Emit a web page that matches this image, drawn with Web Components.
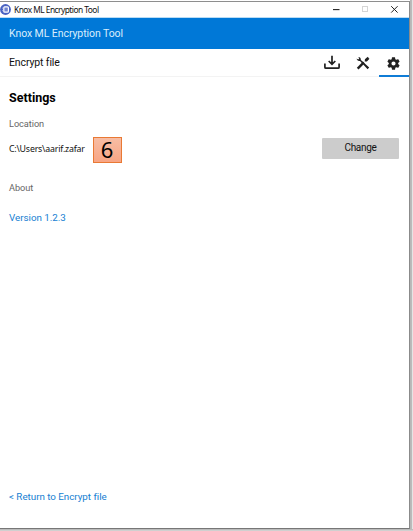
<!DOCTYPE html>
<html lang="en">
<head>
<meta charset="utf-8">
<title>Knox ML Encryption Tool</title>
<style>
html,body{margin:0;width:413px;height:531px;overflow:hidden;background:#fff;font-family:Roboto,sans-serif}
</style>
</head>
<body>
<app-window>
  <title-bar slot="top">Knox ML Encryption Tool</title-bar>
  <app-header slot="top">Knox ML Encryption Tool</app-header>
  <tool-nav slot="top">Encrypt file</tool-nav>
  <settings-page>
    <span slot="title">Settings</span>
    <span slot="path">C:\Users\aarif.zafar</span>
    <step-badge slot="badge">6</step-badge>
    <flat-button slot="action">Change</flat-button>
    <span slot="version">Version 1.2.3</span>
    <span slot="back">&lt; Return to Encrypt file</span>
  </settings-page>
</app-window>
<script>
const define = (name, html) => customElements.define(name, class extends HTMLElement {
  constructor() {
    super();
    this.attachShadow({mode: 'open'}).innerHTML = html;
  }
});

define('app-window', `<style>
:host{display:flex;box-sizing:border-box;width:413px;height:531px;padding-top:1px;background:linear-gradient(90deg,#fff 410px,#b5b5b5 410px,#bdbdbd 412px,#e4e4e4 412px)}
.frame{display:flex;flex-direction:column;box-sizing:border-box;width:410px;height:528px;background:#fff;border-top:1px solid #8e8e8e;border-right:1px solid #8b8b8b;border-bottom:1px solid #777}
.shell{display:flex;flex-direction:column;width:413px;height:530px}
.shadow{height:2px;background:linear-gradient(#b2b2b2,#dadada)}
</style><div class="shell"><div class="frame"><slot name="top"></slot><slot></slot></div><div class="shadow"></div></div>`);

define('title-bar', `<style>
:host{display:flex;align-items:center;height:15px;flex:none;font:8.4px/15px "Noto Sans",sans-serif;color:#111;border-bottom:1px solid #b9dcf5}
.logo{width:11px;height:11px;flex:none;margin-right:3px}
.text{flex:1;white-space:nowrap;letter-spacing:-.53px}
.controls{width:86px;height:15px;flex:none}
</style>
<svg class="logo" viewBox="0 0 11 11"><circle cx="5.5" cy="5.5" r="5.4" fill="#4a62c2"/><rect x="3.8" y="2.8" width="4.6" height="5.4" rx=".9" fill="#7184d0" stroke="#fff" stroke-width="1.2"/><path d="M2.2 4.2h1.6M2.2 6.6h1.6" stroke="#c5cef0" stroke-width=".8"/></svg>
<span class="text"><slot></slot></span>
<svg class="controls" viewBox="0 0 86 15" fill="none"><path d="M10 7.6h6.5" stroke="#222" stroke-width="1.1"/><rect x="39.5" y="4.5" width="5" height="5" stroke="#d5d5d5"/><path d="M68.2 4.2l6.4 6.4M74.6 4.2l-6.4 6.4" stroke="#222" stroke-width="1"/></svg>`);

define('app-header', `<style>
:host{display:flex;align-items:center;box-sizing:border-box;height:31px;flex:none;padding:0 9px;background:#0078d7;color:#d9edfc;font-size:10.5px;letter-spacing:-.07px;white-space:nowrap}
</style><slot></slot>`);

define('tool-nav', `<style>
:host{display:flex;align-items:stretch;box-sizing:border-box;height:28px;flex:none;padding-left:9px;border-bottom:1px solid #f3f3f3;font-size:10.5px;color:#111;letter-spacing:-.12px}
.label{flex:1;line-height:28px}
.tab{width:31px;display:flex;align-items:center;justify-content:center;box-sizing:border-box;padding-right:2px}
.tab.active{width:30px;border-bottom:2px solid #0f7cd6;padding-top:2px;padding-right:1px;margin-bottom:-1px}
svg{display:block}
</style><span class="label"><slot></slot></span>
<div class="tab"><svg width="16" height="15" viewBox="0 0 16 15" fill="none" stroke="#202020" stroke-width="1.7"><path d="M8 .8v8M4.7 6L8 9.3 11.3 6M.9 8.4v3.8q0 1 1 1h12.2q1 0 1-1V8.4"/></svg></div>
<div class="tab"><svg width="14" height="14" viewBox="0 0 14 14" fill="#202020"><path d="M4.9 3.9l8.3 7.6-1.6 1.7L4 4.9Q2.3 5.3 1 3.8L.6 2.5l1.5 1 1.1-1.1L2.3.9q2.6.2 2.6 3z"/><path d="M.8 11.8L7 5.6l1.7 1.7-6.2 6.2z"/><path d="M8.7 5.5l.2-2.3L11.7.8l.4.9.8-.3-.1 1 .7.3-2.6 2.8z"/></svg></div>
<div class="tab active"><svg width="15" height="15" viewBox="0 0 24 24" fill="#202020"><path fill-rule="evenodd" d="M19.43 12.98c.04-.32.07-.64.07-.98s-.03-.66-.07-.98l2.11-1.65c.19-.15.24-.42.12-.64l-2-3.46c-.12-.22-.39-.3-.61-.22l-2.49 1a7.3 7.3 0 0 0-1.69-.98L14.5 2.42A.5.5 0 0 0 14 2h-4a.5.5 0 0 0-.5.42l-.38 2.65c-.61.25-1.17.59-1.69.98l-2.49-1a.5.5 0 0 0-.61.22l-2 3.46c-.13.22-.07.49.12.64l2.11 1.65a7.9 7.9 0 0 0 0 1.96l-2.11 1.65a.5.5 0 0 0-.12.64l2 3.46c.12.22.39.3.61.22l2.49-1c.52.4 1.08.73 1.69.98l.38 2.65c.03.24.25.42.5.42h4c.25 0 .47-.18.5-.42l.38-2.65c.61-.25 1.17-.59 1.69-.98l2.49 1c.23.09.49 0 .61-.22l2-3.46a.5.5 0 0 0-.12-.64zM12 15.3a3.3 3.3 0 1 1 0-6.6 3.3 3.3 0 0 1 0 6.6z"/></svg></div>`);

define('step-badge', `<style>
:host{display:flex;box-sizing:border-box;width:29px;height:26px;justify-content:center;align-items:center;border:1px solid #e97934;background:linear-gradient(#f7bda4,#f8a584);font:22px/22px "Noto Sans",sans-serif;color:#000;padding:0 1px 2px 0}
</style><slot></slot>`);

define('flat-button', `<style>
:host{display:block;box-sizing:border-box;width:77px;height:21px;background:#ccc;border-radius:1px;text-align:center;font:10px/19px Roboto,sans-serif;color:#111;letter-spacing:-.3px}
</style><slot></slot>`);

define('settings-page', `<style>
:host{display:flex;flex-direction:column;flex:1;box-sizing:border-box;padding:12px 10px 24px 9px;white-space:nowrap;font-size:10px;color:#111}
h1{margin:0;font-size:12.5px;line-height:18px;font-weight:700;color:#000}
.label{font-size:9.2px;line-height:12px;color:#666;letter-spacing:-.05px}
.location{margin-top:11px}
.row{display:flex;align-items:center;height:26px;margin-top:7px}
.path{width:84px;padding-bottom:3px;font:8.8px/14px "Noto Sans",sans-serif;letter-spacing:-.19px}
.action{margin-left:auto;margin-bottom:3px}
.about{margin-top:19px}
.link{color:#1680d2;font-size:9.8px;line-height:14px;letter-spacing:-.02px}
.version{margin-top:17px}
.back{margin-top:auto}
</style>
<h1><slot name="title"></slot></h1>
<div class="label location">Location</div>
<div class="row"><div class="path"><slot name="path"></slot></div><slot name="badge"></slot><div class="action"><slot name="action"></slot></div></div>
<div class="label about">About</div>
<div class="link version"><slot name="version"></slot></div>
<div class="link back"><slot name="back"></slot></div>`);
</script>
</body>
</html>
